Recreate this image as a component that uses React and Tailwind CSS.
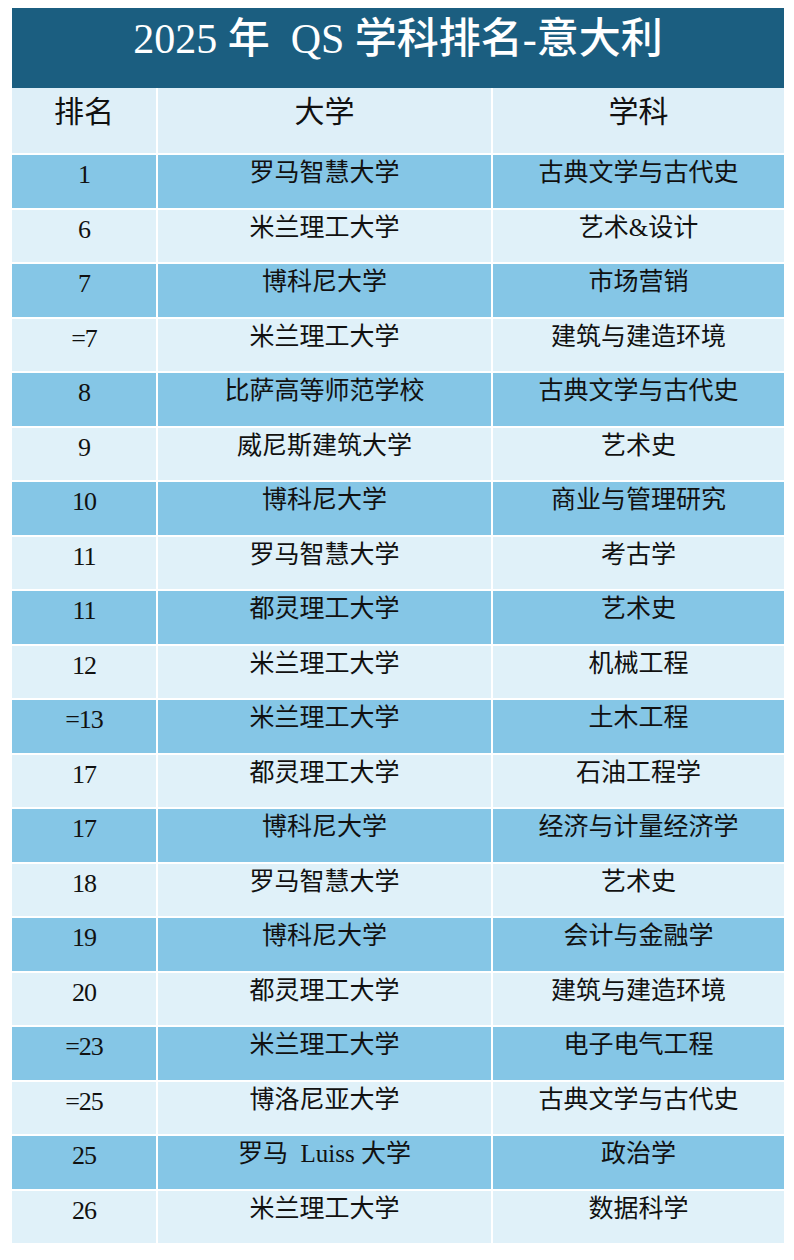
const rows = [
  ['1', '罗马智慧大学', '古典文学与古代史'],
  ['6', '米兰理工大学', '艺术&设计'],
  ['7', '博科尼大学', '市场营销'],
  ['=7', '米兰理工大学', '建筑与建造环境'],
  ['8', '比萨高等师范学校', '古典文学与古代史'],
  ['9', '威尼斯建筑大学', '艺术史'],
  ['10', '博科尼大学', '商业与管理研究'],
  ['11', '罗马智慧大学', '考古学'],
  ['11', '都灵理工大学', '艺术史'],
  ['12', '米兰理工大学', '机械工程'],
  ['=13', '米兰理工大学', '土木工程'],
  ['17', '都灵理工大学', '石油工程学'],
  ['17', '博科尼大学', '经济与计量经济学'],
  ['18', '罗马智慧大学', '艺术史'],
  ['19', '博科尼大学', '会计与金融学'],
  ['20', '都灵理工大学', '建筑与建造环境'],
  ['=23', '米兰理工大学', '电子电气工程'],
  ['=25', '博洛尼亚大学', '古典文学与古代史'],
  ['25', '罗马  Luiss 大学', '政治学'],
  ['26', '米兰理工大学', '数据科学'],
];

function App() {
  return (
    <div className="min-h-screen bg-white pt-[8px] px-[12px] [font-family:'Liberation_Serif','Noto_Sans_CJK_SC',serif] text-[#111]">
      <div className="w-[772px]">
        {/* Title band */}
        <div className="h-[80px] bg-[#1b5e80] text-white text-center text-[42px] leading-[50px] pt-[6px] font-medium">
          2025 年&nbsp; QS 学科排名-意大利
        </div>

        <div className="flex flex-col gap-[2px] bg-white">
          {/* Header */}
          <div className="grid grid-cols-[144px_333px_1fr] gap-[2px] h-[65px]">
            {['排名', '大学', '学科'].map(h => (
              <div key={h} className="bg-[#deeff8] text-center text-[30px] leading-[36px] pt-[6px]">{h}</div>
            ))}
          </div>

          {rows.map((r, i) => (
            <div key={i} className="grid grid-cols-[144px_333px_1fr] gap-[2px] h-[52.5px]">
              {r.map((c, j) => (
                <div
                  key={j}
                  className={`${i % 2 === 0 ? 'bg-[#85c6e6]' : 'bg-[#e0f1f9]'} text-center whitespace-pre ${j === 0 ? 'text-[26px] leading-[30px] pt-[5px] tracking-[-1px]' : 'text-[25px] leading-[30px] pt-[3px]'}`}
                >
                  {c}
                </div>
              ))}
            </div>
          ))}
        </div>
      </div>
    </div>
  );
}

export default App;
